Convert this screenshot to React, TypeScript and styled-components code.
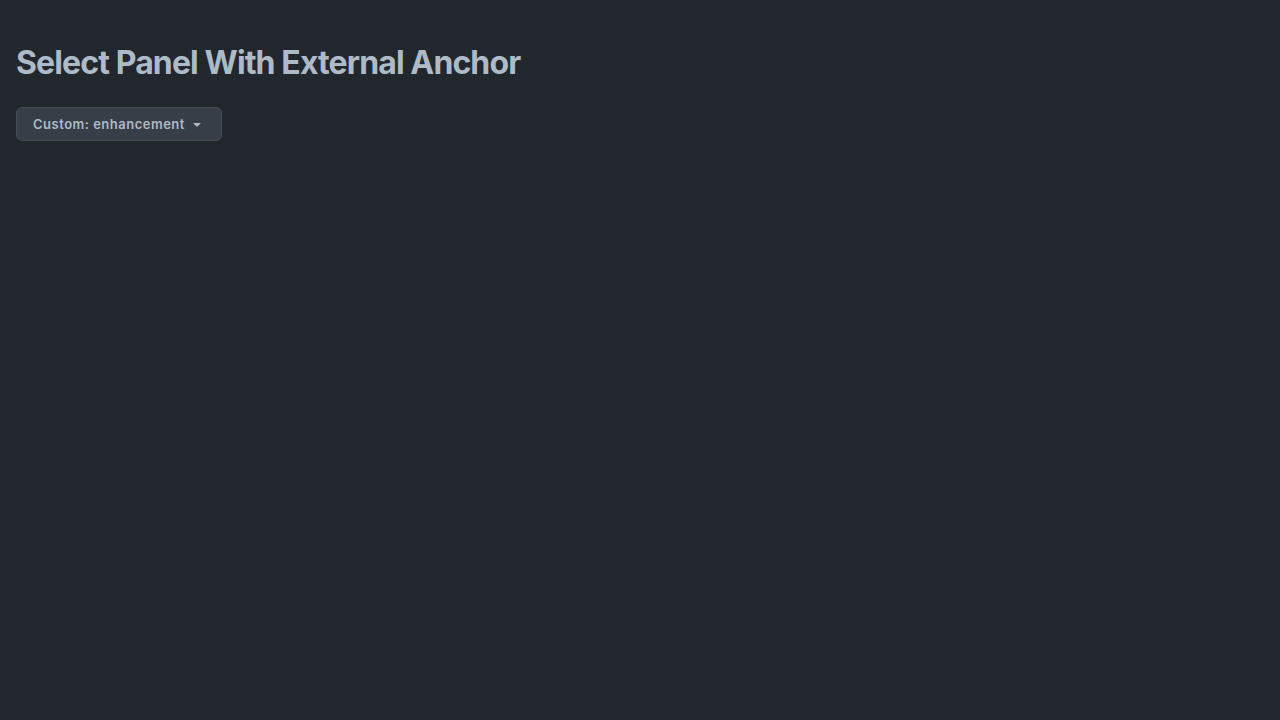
import React from "react";
import styled, { createGlobalStyle } from "styled-components";

const Global = createGlobalStyle`
  html, body { margin: 0; padding: 0; background: #22272e; }
  body { font-family: Inter, "Noto Sans", "Liberation Sans", sans-serif; color: #adbac7; }
`;

const Page = styled.div`
  min-height: 720px;
  padding: 16px;
  box-sizing: border-box;
  background: #22272e;
`;

const Title = styled.h1`
  margin: 23px 0 20px 0;
  font-size: 32px;
  line-height: 48px;
  font-weight: 700;
  color: #adbac7;
  letter-spacing: -0.88px;
`;

const Button = styled.button`
  display: inline-flex;
  align-items: center;
  gap: 4px;
  height: 34px;
  padding: 0 16px 0 16px;
  background: #373e47;
  border: 1px solid #444c56;
  border-radius: 6px;
  color: #adbac7;
  font-family: Inter, "Noto Sans", "Liberation Sans", sans-serif;
  font-size: 13px;
  font-weight: 600;
  letter-spacing: 0.5px;
  cursor: pointer;
`;

const Caret = styled.svg`
  width: 16px;
  height: 16px;
  fill: currentColor;
`;

export default function App() {
  return (
    <>
      <Global />
      <Page>
        <Title>Select Panel With External Anchor</Title>
        <Button>
          Custom: enhancement
          <Caret viewBox="0 0 16 16">
            <path d="m4.427 7.427 3.396 3.396a.25.25 0 0 0 .354 0l3.396-3.396A.25.25 0 0 0 11.396 7H4.604a.25.25 0 0 0-.177.427Z" />
          </Caret>
        </Button>
      </Page>
    </>
  );
}
